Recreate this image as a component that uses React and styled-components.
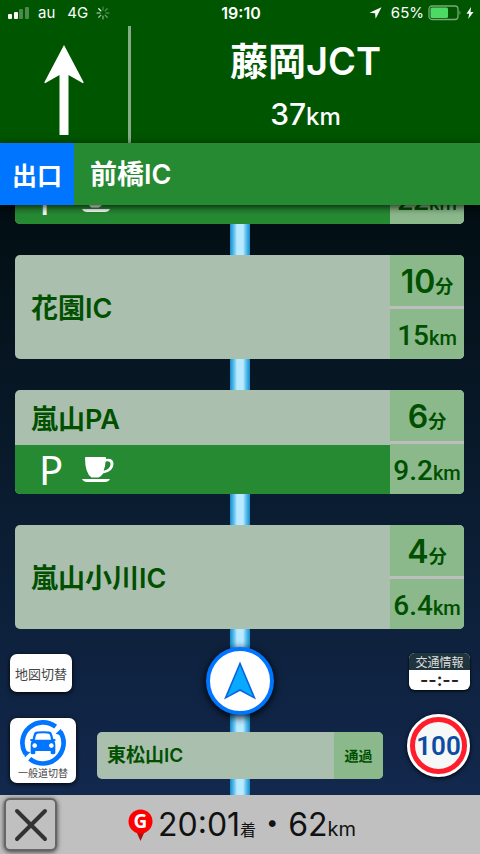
import styled, { createGlobalStyle } from "styled-components";

const GlobalStyle = createGlobalStyle`
  * { box-sizing: border-box; }

  body {
    margin: 0;
    background: #03101a;
    font-family: Inter, "Noto Sans CJK JP", sans-serif;
  }

  h1, p, ul { margin: 0; padding: 0; }
  ul { list-style: none; }
  button { font: inherit; cursor: pointer; }
  svg { display: block; flex: none; }
`;

// ── Layout ────────────────────────────────────────────────

const Screen = styled.div`
  height: 100vh;
  display: flex;
  flex-direction: column;
`;

// ── Status bar ────────────────────────────────────────────

const StatusBar = styled.div`
  display: grid;
  grid-template-columns: 1fr auto 1fr;
  align-items: center;
  height: 26px;
  padding: 0 6px 0 8px;
  background: #005500;
  color: #fff;
  font-size: 15px;
  line-height: 20px;
`;

const StatusGroup = styled.div`
  display: flex;
  align-items: center;
  justify-content: ${p => (p.$end ? "flex-end" : "flex-start")};
  gap: ${p => (p.$end ? "4px" : "8px")};
`;

const Carrier = styled.span`
  margin-right: 4px;
`;

const Percent = styled.span`
  margin-left: 5px;
`;

const Clock = styled.time`
  font-size: 16px;
  font-weight: 600;
`;

// ── Next junction ─────────────────────────────────────────

const Junction = styled.header`
  display: grid;
  grid-template-columns: 131px 1fr;
  height: 117px;
  background: #005500;
  color: #fff;
`;

const Direction = styled.div`
  display: flex;
  justify-content: center;
  padding-top: 19px;
  border-right: 3px solid #86ac86;
`;

const JunctionText = styled.div`
  display: flex;
  flex-direction: column;
  align-items: center;
  gap: 8px;
  padding-top: 12px;
`;

const JunctionName = styled.h1`
  font-size: 38px;
  font-weight: 600;
  line-height: 46px;
`;

const JunctionDistance = styled.p`
  font-size: 30px;
  font-weight: 500;
  line-height: 44px;
`;

const Unit = styled.span`
  font-size: ${p => p.$size}px;
  line-height: 1;
`;

const ExitBar = styled.div`
  display: flex;
  height: 62px;
  background: #268a33;
  color: #fff;
  box-shadow: 0 2px 8px rgba(0, 0, 0, 0.8);
  z-index: 1;
`;

const ExitTag = styled.div`
  display: flex;
  align-items: center;
  justify-content: center;
  width: 74px;
  background: #0075ff;
  font-family: "Noto Sans CJK JP", sans-serif;
  font-size: 25px;
  font-weight: 700;
  line-height: 36px;
`;

const ExitName = styled.p`
  padding-left: 16px;
  font-size: 27px;
  font-weight: 600;
  line-height: 64px;
`;

// ── Route ─────────────────────────────────────────────────

const Route = styled.main`
  flex: 1;
  min-height: 0;
  display: flex;
  flex-direction: column;
  justify-content: flex-end;
  overflow: hidden;
  background:
    linear-gradient(90deg, #168bcb, #5cc0ee 20%, #b9eaff 35%, #b9eaff 65%, #5cc0ee 80%, #168bcb)
      center / 20px 100% no-repeat,
    linear-gradient(180deg, #020e12, #0a1c30 50%, #12284d);
`;

const Stops = styled.ul`
  display: flex;
  flex-direction: column;
  gap: 31px;
  padding: 0 16px 0 15px;
`;

const Stop = styled.li`
  display: grid;
  grid-template-columns: 1fr 74px;
  grid-template-rows: minmax(0, 1fr);
  flex: none;
  height: 104px;
  border-radius: 5px;
  overflow: hidden;
  background: #aabfad;
  color: #005000;
`;

const StopInfo = styled.div`
  display: flex;
  flex-direction: column;
  justify-content: flex-end;
`;

const StopName = styled.p`
  flex: 1;
  display: flex;
  align-items: center;
  padding: 4px 0 0 16px;
  font-size: 27px;
  font-weight: 600;
  line-height: 36px;
`;

const Facilities = styled.div`
  display: flex;
  align-items: center;
  flex: none;
  gap: 19px;
  height: 49px;
  padding-left: 24px;
  background: #268a33;
  color: #fff;
`;

const Parking = styled.span`
  width: 24px;
  text-align: center;
  font-family: "Noto Sans", sans-serif;
  font-size: 40px;
  line-height: 48px;
`;

const Figures = styled.div`
  display: grid;
  grid-template-rows: repeat(2, minmax(0, 1fr));
  gap: 3px;
  background: #bdbdbd;
`;

const Figure = styled.p`
  padding-top: 2px;
  background: #8bb98c;
  font-family: ${p => (p.$narrow ? "Roboto" : "Inter")}, "Noto Sans CJK JP", sans-serif;
  font-size: ${p => (p.$narrow ? 28 : 32)}px;
  font-weight: ${p => (p.$narrow ? 500 : 600)};
  line-height: 50px;
  text-align: center;
  white-space: nowrap;
`;

// ── Controls around the vehicle ───────────────────────────

const Dock = styled.section`
  display: grid;
  grid-template-columns: 66px 1fr 66px;
  column-gap: 21px;
  flex: none;
  height: 166px;
  padding: 0 10px;
`;

const DockColumn = styled.div`
  display: flex;
  flex-direction: column;
  justify-content: space-between;
  align-items: ${p => p.$align || "stretch"};
  padding: ${p => p.$pad};
`;

const MapToggle = styled.button`
  width: 62px;
  height: 38px;
  padding: 0;
  border: 0;
  border-radius: 7px;
  background: #fff;
  color: #444;
  font-family: "Noto Sans CJK JP", sans-serif;
  font-size: 13px;
  box-shadow: 0 1px 4px #000;
`;

const RoadToggle = styled.button`
  display: flex;
  flex-direction: column;
  align-items: center;
  width: 66px;
  height: 65px;
  padding: 2px 0 0;
  border: 0;
  border-radius: 7px;
  background: #fff;
  color: #444;
  font-family: "Noto Sans CJK JP", sans-serif;
  font-size: 10px;
  line-height: 14px;
  box-shadow: 0 1px 4px #000;
`;

const Vehicle = styled.div`
  display: flex;
  align-items: center;
  justify-content: center;
  width: 68px;
  height: 68px;
  border: 4px solid #0075ff;
  border-radius: 50%;
  background: #fff;
  box-shadow: 0 2px 8px #000;
`;

const PassedStop = styled.div`
  display: grid;
  grid-template-columns: 1fr 49px;
  width: 100%;
  height: 47px;
  border-radius: 5px;
  overflow: hidden;
  background: #aabfad;
  color: #005000;
  font-size: 19px;
  font-weight: 600;
  line-height: 47px;
`;

const PassedName = styled.p`
  padding-left: 10px;
`;

const PassedTag = styled.p`
  background: #8bb98c;
  font-size: 14px;
  font-weight: 700;
  text-align: center;
`;

const Traffic = styled.button`
  width: 61px;
  padding: 0;
  border: 0;
  border-radius: 6px;
  overflow: hidden;
  background: #fff;
  color: #222;
  box-shadow: 0 1px 3px #000;
`;

const TrafficTitle = styled.span`
  display: block;
  background: #1f343c;
  color: #ddd;
  font-family: "Noto Sans CJK JP", sans-serif;
  font-size: 12px;
  line-height: 17px;
`;

const TrafficTime = styled.span`
  display: block;
  font-size: 18px;
  font-weight: 600;
  line-height: 20px;
`;

const SpeedLimit = styled.div`
  width: 63px;
  height: 63px;
  border: 3px solid #fff;
  border-radius: 50%;
  background: #f6f8f8;
  box-shadow: 0 1px 4px #000;
`;

const SpeedRing = styled.div`
  display: flex;
  align-items: center;
  justify-content: center;
  height: 100%;
  border: 5px solid #ff1c2b;
  border-radius: 50%;
  color: #0c4da2;
  font-family: Roboto, sans-serif;
  font-size: 26px;
  font-weight: 600;
`;

// ── Arrival ───────────────────────────────────────────────

const ArrivalBar = styled.footer`
  display: grid;
  grid-template-columns: 53px 1fr 49px;
  align-items: center;
  height: 59px;
  padding: 0 4px;
  background: #c0c0c0;
  color: #111;
`;

const CloseButton = styled.button`
  display: flex;
  align-items: center;
  justify-content: center;
  width: 53px;
  height: 53px;
  padding: 0;
  border: 2px solid #666;
  border-radius: 6px;
  background: #c0c0c0;
  box-shadow: 0 1px 5px rgba(0, 0, 0, 0.7);
`;

const Arrival = styled.div`
  display: flex;
  align-items: center;
  justify-content: center;
  gap: 5px;
`;

const ArrivalText = styled.p`
  font-size: 32px;
  line-height: 54px;
  white-space: nowrap;
`;

// ── Icons ─────────────────────────────────────────────────

const SignalIcon = () => (
  <svg width="22" height="14" viewBox="0 0 22 14" fill="#fff" aria-hidden="true">
    <rect x="0" y="8" width="4" height="5" rx="1" />
    <rect x="6" y="6" width="4" height="7" rx="1" />
    <rect x="11" y="3" width="4" height="10" rx="1" opacity=".3" />
    <rect x="17" y="1" width="4" height="12" rx="1" opacity=".3" />
  </svg>
);

const SpinnerIcon = () => (
  <svg width="14" height="14" viewBox="-7 -7 14 14" stroke="#fff" strokeWidth="1.2" strokeLinecap="round" aria-hidden="true">
    {[0.3, 0.35, 0.4, 0.45, 0.55, 0.65, 0.8, 1].map((opacity, i) => (
      <path key={i} d="M0-3V-6" opacity={opacity} transform={`rotate(${i * 45})`} />
    ))}
  </svg>
);

const LocationIcon = () => (
  <svg width="13" height="12" viewBox="0 0 13 12" fill="#fff" aria-hidden="true">
    <path d="M12.5.3.5 5.8l5.6.4.5 5.6z" />
  </svg>
);

const BatteryIcon = () => (
  <svg width="34" height="16" viewBox="0 0 34 16" aria-hidden="true">
    <rect x="1" y="1" width="29" height="13.5" rx="3" fill="none" stroke="#7ba87b" strokeWidth="1.3" />
    <rect x="2.5" y="2.5" width="17.5" height="10.5" rx="1.5" fill="#4cd964" />
    <path d="M31.5 5.5q2 2 0 4.5z" fill="#7ba87b" />
  </svg>
);

const BoltIcon = () => (
  <svg width="8" height="12" viewBox="0 0 8 12" fill="#fff" aria-hidden="true">
    <path d="M5 0 .5 6.7h2.7L2.2 12 7.5 4.9h-3z" />
  </svg>
);

const StraightIcon = () => (
  <svg width="40" height="90" viewBox="0 0 40 90" fill="#fff" role="img" aria-label="直進">
    <path d="M20 0 39.5 37q.3 1.5-1 1l-14-8v60h-9V30l-14 8q-1.3.5-1-1z" />
  </svg>
);

const CupIcon = () => (
  <svg width="32" height="27" viewBox="0 0 32 27" fill="#fff" role="img" aria-label="カフェ">
    <path
      fillRule="evenodd"
      d="M3 2q0-1 1-1h19q1 0 1 1v1q7.500-1 7.500 5 0 7.500-10.500 9.500-1.800 3.200-4.500 4H9.500Q3 17 3 2zM23.600 5.500q-.2 5-2 9.200Q28.500 13 28.500 8.200q0-3.500-4.900-2.700z"
    />
    <path d="M0 23h28q-1.500 3-5 3H5q-3.500 0-5-3z" />
  </svg>
);

const VehicleIcon = () => (
  <svg width="34" height="42" viewBox="0 0 34 42" role="img" aria-label="現在地">
    <path d="M17 1.500 33 39.500 17 31 1 39.500z" fill="#0b62dc" />
    <path d="M17 5.500 30 36.500 17 29 4 36.500z" fill="#08a9ff" />
  </svg>
);

const CarSwitchIcon = () => (
  <svg width="46" height="46" viewBox="0 0 138 138" fill="#0075ff" aria-hidden="true">
    <g fill="none" stroke="#0075ff" strokeWidth="14">
      <path d="M16 101A62 62 0 0 1 107 20" />
      <path d="M121 35A62 62 0 0 1 29 116" />
    </g>
    <path d="M107 41 123 26l7 22zM31 97 15 112 8 90z" />
    <path
      fillRule="evenodd"
      d="M45 37q3-3 24-3t24 3q3 3 7 20 7-1 7 3-1 4-4 4 3 4 3 10v25q0 4-7 4t-7-4v-6H46v6q0 4-7 4t-7-4V74q0-6 3-10-4 0-5-4 0-4 8-3 3-17 7-20zm5 5q-3 3-5 17h48q-2-14-5-17-3-2-19-2t-19 2zM44 70a7 7 0 1 0 .1 0zM94 70a7 7 0 1 0 .1 0z"
    />
  </svg>
);

const GoalIcon = () => (
  <svg width="25" height="32" viewBox="0 0 25 32" role="img" aria-label="目的地">
    <path d="M8 22h9l-4.500 10z" fill="#b01010" />
    <circle cx="12.5" cy="12.5" r="12" fill="#f00" />
    <text x="12.5" y="19" textAnchor="middle" fill="#fff" fontFamily="Open Sans, sans-serif" fontSize="19" fontWeight="700">G</text>
  </svg>
);

const CloseIcon = () => (
  <svg width="34" height="34" viewBox="0 0 34 34" stroke="#333" strokeWidth="4" strokeLinecap="round" aria-hidden="true">
    <path d="M3 3 31 31M31 3 3 31" />
  </svg>
);

// ── App ───────────────────────────────────────────────────

// the farthest stop is half scrolled away, only its lower row shows
const stops = [
  { id: 1, km: "22", facilities: true },
  { id: 2, name: "花園IC", minutes: 10, km: "15" },
  { id: 3, name: "嵐山PA", minutes: 6, km: "9.2", facilities: true },
  { id: 4, name: "嵐山小川IC", minutes: 4, km: "6.4" }
];

function StopCard({ stop }) {
  return (
    <Stop>
      <StopInfo>
        {stop.name && <StopName>{stop.name}</StopName>}
        {stop.facilities && (
          <Facilities>
            <Parking>P</Parking>
            <CupIcon />
          </Facilities>
        )}
      </StopInfo>
      <Figures>
        <Figure>
          {stop.minutes && <>{stop.minutes}<Unit $size={18}>分</Unit></>}
        </Figure>
        <Figure $narrow>{stop.km}<Unit $size={20}>km</Unit></Figure>
      </Figures>
    </Stop>
  );
}

export default function App() {
  return (
    <Screen>
      <GlobalStyle />

      <StatusBar>
        <StatusGroup>
          <SignalIcon />
          <Carrier>au</Carrier>
          <span>4G</span>
          <SpinnerIcon />
        </StatusGroup>
        <Clock>19:10</Clock>
        <StatusGroup $end>
          <LocationIcon />
          <Percent>65%</Percent>
          <BatteryIcon />
          <BoltIcon />
        </StatusGroup>
      </StatusBar>

      <Junction>
        <Direction><StraightIcon /></Direction>
        <JunctionText>
          <JunctionName>藤岡JCT</JunctionName>
          <JunctionDistance>37<Unit $size={24}>km</Unit></JunctionDistance>
        </JunctionText>
      </Junction>

      <ExitBar>
        <ExitTag>出口</ExitTag>
        <ExitName>前橋IC</ExitName>
      </ExitBar>

      <Route>
        <Stops>
          {stops.map(stop => <StopCard key={stop.id} stop={stop} />)}
        </Stops>

        <Dock>
          <DockColumn $pad="25px 0 12px">
            <MapToggle type="button">地図切替</MapToggle>
            <RoadToggle type="button">
              <CarSwitchIcon />
              一般道切替
            </RoadToggle>
          </DockColumn>

          <DockColumn $align="center" $pad="18px 0 16px">
            <Vehicle><VehicleIcon /></Vehicle>
            <PassedStop>
              <PassedName>東松山IC</PassedName>
              <PassedTag>通過</PassedTag>
            </PassedStop>
          </DockColumn>

          <DockColumn $align="flex-end" $pad="24px 0 18px">
            <Traffic type="button">
              <TrafficTitle>交通情報</TrafficTitle>
              <TrafficTime>--:--</TrafficTime>
            </Traffic>
            <SpeedLimit><SpeedRing>100</SpeedRing></SpeedLimit>
          </DockColumn>
        </Dock>
      </Route>

      <ArrivalBar>
        <CloseButton type="button" aria-label="閉じる"><CloseIcon /></CloseButton>
        <Arrival>
          <GoalIcon />
          <ArrivalText>
            20:01<Unit $size={16}>着</Unit>・62<Unit $size={20}>km</Unit>
          </ArrivalText>
        </Arrival>
      </ArrivalBar>
    </Screen>
  );
}
